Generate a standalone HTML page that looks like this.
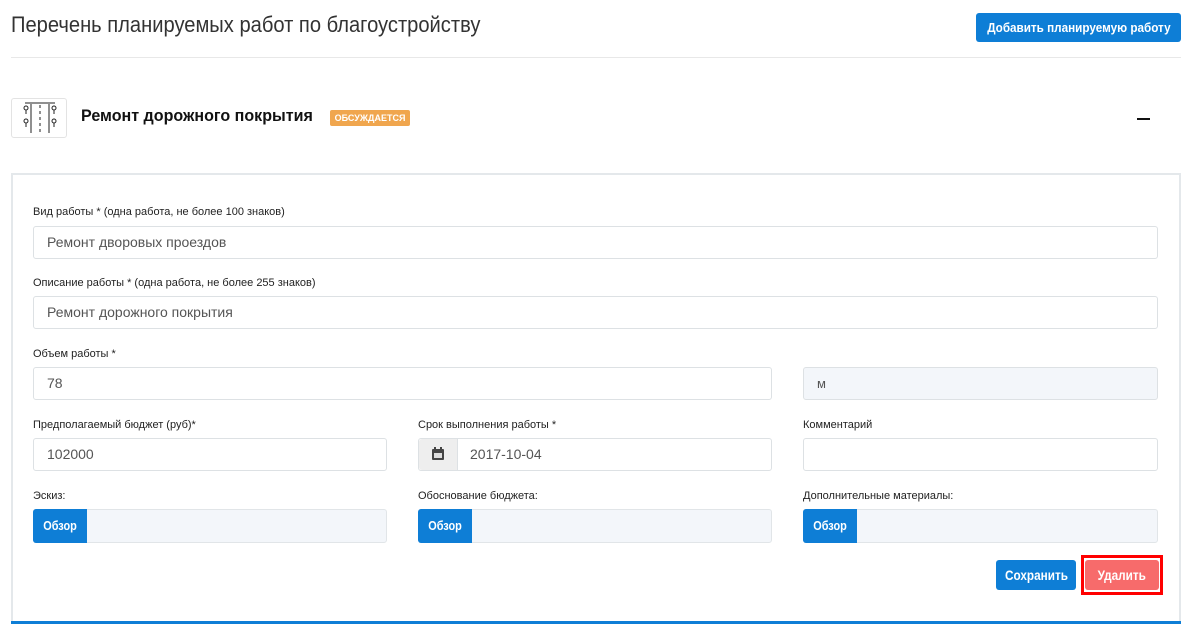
<!DOCTYPE html>
<html><head><meta charset="utf-8"><style>
*{box-sizing:border-box;margin:0;padding:0}
body{width:1193px;height:641px;background:#fff;font-family:"Liberation Sans",sans-serif;position:relative;overflow:hidden;color:#333}
.a{position:absolute}
.n{transform-origin:0 0;white-space:nowrap}
.t{font-size:22px;color:#333;left:11px;top:12px;transform:scaleX(0.915)}
.btn{background:#0e7ed6;color:#fff;font-weight:bold;font-size:14px;text-align:center;border-radius:3px;overflow:hidden}
.btn b{display:inline-block;transform:scaleX(0.84);white-space:nowrap}
.lbl{font-size:11px;color:#222}
.inp{border:1px solid #dde1e4;border-radius:3px;height:33px;font-size:14px;color:#555;padding-left:13px;line-height:31px;background:#fff}
.file{background:#f3f6fa;border:1px solid #e1e5e8;border-radius:3px;height:34px}
.file span{position:absolute;left:-1px;top:-1px;width:54px;height:34px;background:#0e7ed6;color:#fff;font-weight:bold;font-size:13px;line-height:34px;text-align:center;border-radius:3px 0 0 3px}
.file span b{display:inline-block;transform:scaleX(0.84)}
</style></head><body>
<div class="a t n">Перечень планируемых работ по благоустройству</div>
<div class="a btn" style="left:976px;top:13px;width:205px;height:29px;line-height:29px;font-size:13px"><b style="transform:scaleX(0.9)">Добавить планируемую работу</b></div>
<div class="a" style="left:11px;top:57px;width:1170px;height:1px;background:#e8e8e8"></div>

<div class="a" style="left:11px;top:98px;width:56px;height:40px;border:1px solid #e3e3e3;border-radius:3px">
<svg width="56" height="40" viewBox="0 0 56 40"><line x1="13" y1="4" x2="43" y2="4" stroke="#222"/><line x1="19" y1="5" x2="19" y2="34" stroke="#222"/><line x1="37" y1="5" x2="37" y2="34" stroke="#222"/><line x1="28" y1="6" x2="28" y2="34" stroke="#222" stroke-dasharray="3,3"/><g fill="none" stroke="#222"><circle cx="14" cy="9" r="2"/><circle cx="14" cy="22" r="2"/><circle cx="42" cy="9" r="2"/><circle cx="42" cy="22" r="2"/></g><g stroke="#222"><line x1="14" y1="11" x2="14" y2="15"/><line x1="14" y1="24" x2="14" y2="28"/><line x1="42" y1="11" x2="42" y2="15"/><line x1="42" y1="24" x2="42" y2="28"/></g></svg></div>
<div class="a n" style="left:81px;top:106px;font-size:17px;color:#111;font-weight:bold;transform:scaleX(0.945)">Ремонт дорожного покрытия</div>
<div class="a" style="left:330px;top:110px;width:80px;height:16px;background:#f0a64e;color:#fff;font-size:9px;font-weight:bold;line-height:16px;text-align:center;border-radius:2px">ОБСУЖДАЕТСЯ</div>
<div class="a" style="left:1137px;top:118px;width:13px;height:2px;background:#111"></div>

<div class="a" style="left:11px;top:173px;width:1170px;height:449px;border:2px solid #e4e8eb;border-bottom:none"></div>
<div class="a" style="left:11px;top:621px;width:1170px;height:3px;background:#0e7ed6"></div>

<div class="a lbl" style="left:33px;top:206px">Вид работы * (одна работа, не более 100 знаков)</div>
<div class="a inp" style="left:33px;top:226px;width:1125px">Ремонт дворовых проездов</div>
<div class="a lbl" style="left:33px;top:277px">Описание работы * (одна работа, не более 255 знаков)</div>
<div class="a inp" style="left:33px;top:296px;width:1125px">Ремонт дорожного покрытия</div>
<div class="a lbl" style="left:33px;top:348px">Объем работы *</div>
<div class="a inp" style="left:33px;top:367px;width:739px">78</div>
<div class="a inp" style="left:803px;top:367px;width:355px;background:#f3f6fa;font-size:13px">м</div>
<div class="a lbl" style="left:33px;top:419px">Предполагаемый бюджет (руб)*</div>
<div class="a inp" style="left:33px;top:438px;width:354px">102000</div>
<div class="a lbl" style="left:418px;top:419px">Срок выполнения работы *</div>
<div class="a inp" style="left:418px;top:438px;width:354px;padding-left:51px">2017-10-04</div>
<div class="a" style="left:419px;top:439px;width:39px;height:31px;background:#eeeeee;border-right:1px solid #dde1e4;border-radius:3px 0 0 3px">
<svg width="39" height="31"><rect x="13" y="10" width="12" height="11" rx="1" fill="#444"/><rect x="15" y="14" width="8" height="5" fill="#ddd"/><rect x="15" y="8" width="2" height="3" fill="#444"/><rect x="21" y="8" width="2" height="3" fill="#444"/></svg></div>
<div class="a lbl" style="left:803px;top:419px">Комментарий</div>
<div class="a inp" style="left:803px;top:438px;width:355px"></div>
<div class="a lbl" style="left:33px;top:490px">Эскиз:</div>
<div class="a file" style="left:33px;top:509px;width:354px"><span><b>Обзор</b></span></div>
<div class="a lbl" style="left:418px;top:490px">Обоснование бюджета:</div>
<div class="a file" style="left:418px;top:509px;width:354px"><span><b>Обзор</b></span></div>
<div class="a lbl" style="left:803px;top:490px">Дополнительные материалы:</div>
<div class="a file" style="left:803px;top:509px;width:355px"><span><b>Обзор</b></span></div>

<div class="a btn" style="left:996px;top:560px;width:80px;height:30px;line-height:30px"><b>Сохранить</b></div>
<div class="a" style="left:1081px;top:555px;width:82px;height:40px;border:3px solid #f00"></div>
<div class="a btn" style="left:1085px;top:560px;width:74px;height:30px;line-height:30px;background:#f76b6b"><b>Удалить</b></div>
</body></html>
